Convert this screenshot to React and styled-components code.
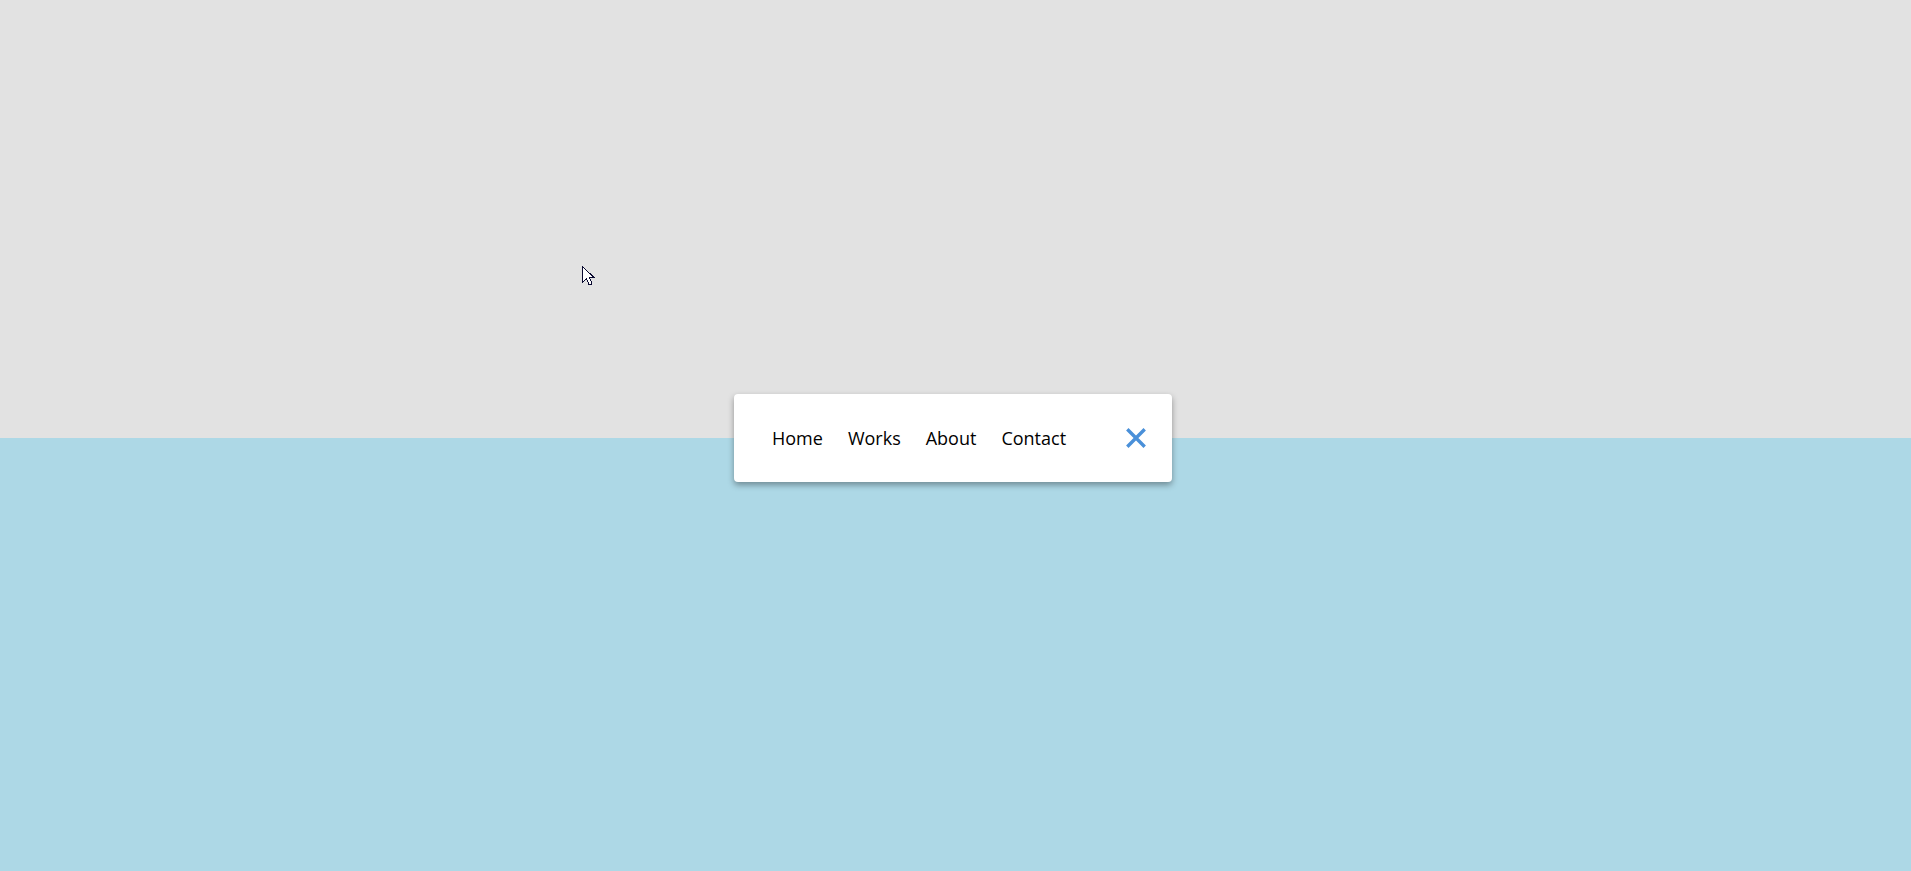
import React, { useState } from 'react';
import styled, { createGlobalStyle } from 'styled-components';

const GlobalStyle = createGlobalStyle`
  * {
    box-sizing: border-box;
  }
  body {
    margin: 0;
    font-family: 'Segoe UI', 'Open Sans', 'Noto Sans', sans-serif;
  }
`;

const Page = styled.main`
  position: relative;
  display: flex;
  align-items: center;
  justify-content: center;
  min-height: 100vh;
  padding: 5px 5px 0 0;
  background: linear-gradient(
    to bottom,
    #e2e2e2 calc((100% + 5px) / 2),
    #add8e6 calc((100% + 5px) / 2)
  );
`;

const Nav = styled.nav`
  display: flex;
  align-items: center;
  justify-content: space-between;
  width: 438px;
  height: 88px;
  padding: 0 16px 0 38px;
  border-radius: 4px;
  background: #fff;
  box-shadow: 0 3px 6px rgba(0, 0, 0, 0.36);
`;

const Links = styled.ul`
  display: flex;
  gap: 25px;
  margin: 0;
  padding: 0;
  list-style: none;

  &[hidden] {
    visibility: hidden;
  }
`;

const NavLink = styled.a`
  color: #000;
  font-size: 18px;
  line-height: 24px;
  text-decoration: none;
`;

const CloseButton = styled.button`
  display: flex;
  padding: 0;
  border: 0;
  background: transparent;
  color: #4a90d9;
  cursor: pointer;
`;

const Pointer = styled.svg`
  position: absolute;
  top: 266px;
  left: 582px;
  pointer-events: none;
`;

const items = ['Home', 'Works', 'About', 'Contact'];

export default function App() {
  const [open, setOpen] = useState(true);

  return (
    <>
      <GlobalStyle />
      <Page>
        <Nav>
          <Links hidden={!open}>
            {items.map((item) => (
              <li key={item}>
                <NavLink href="#">{item}</NavLink>
              </li>
            ))}
          </Links>
          <CloseButton type="button" aria-label="Toggle menu" onClick={() => setOpen(!open)}>
            <svg width="40" height="40" viewBox="0 0 40 40" fill="none" stroke="currentColor" strokeWidth="3.4">
              <path d="M11.3 11.3L28.7 28.7M28.7 11.3L11.3 28.7" />
            </svg>
          </CloseButton>
        </Nav>
        <Pointer width="13" height="21" viewBox="0 0 13 21" aria-hidden="true">
          <path
            d="M.5 .5V16.5L4.5 12.5L7 18.5H9.5V16.5L7.5 11.5H12Z"
            fill="#fff"
            stroke="#0a0a30"
            shapeRendering="crispEdges"
          />
        </Pointer>
      </Page>
    </>
  );
}
